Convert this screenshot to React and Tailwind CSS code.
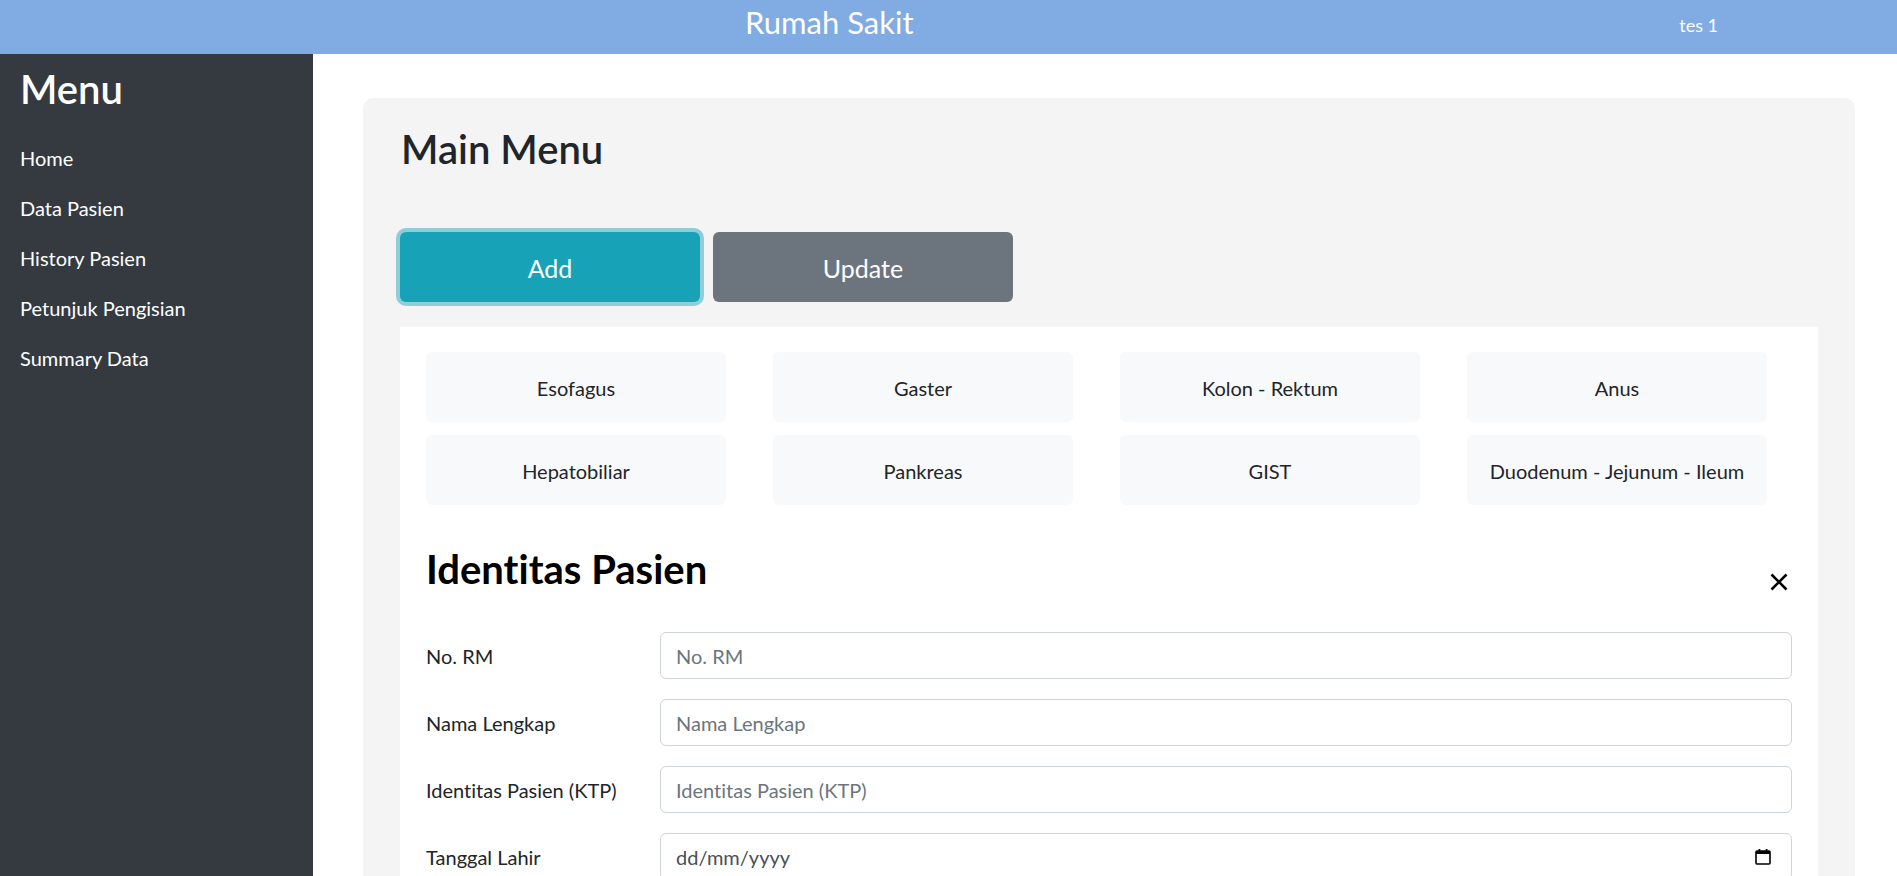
import { useState } from "react";

const categories = [
    "Esofagus",
    "Gaster",
    "Kolon - Rektum",
    "Anus",
    "Hepatobiliar",
    "Pankreas",
    "GIST",
    "Duodenum - Jejunum - Ileum",
];

const fields = [
    { label: "No. RM", placeholder: "No. RM" },
    { label: "Nama Lengkap", placeholder: "Nama Lengkap" },
    { label: "Identitas Pasien (KTP)", placeholder: "Identitas Pasien (KTP)" },
];

const menu = ["Home", "Data Pasien", "History Pasien", "Petunjuk Pengisian", "Summary Data"];

function CalendarIcon() {
    return (
        <svg width="16" height="17" viewBox="0 0 16 17" fill="none">
            <rect x="1" y="3" width="14" height="13" rx="1" stroke="#000" strokeWidth="1.6" />
            <rect x="1" y="3" width="14" height="3" fill="#000" />
            <rect x="3.5" y="1" width="1.8" height="3" fill="#000" />
            <rect x="10.7" y="1" width="1.8" height="3" fill="#000" />
        </svg>
    );
}

export default function App() {
    const [mode, setMode] = useState("add");

    return (
        <div className="min-h-screen flex flex-col font-['Lato',sans-serif] [font-variant-ligatures:none]">
            <header className="h-[54px] bg-[#81abe3] text-white flex items-start shrink-0">
                <div className="pl-[745px] pt-[4px] text-[31px] leading-[1.2]">Rumah Sakit</div>
                <div className="ml-auto pr-[179px] pt-[15px] text-[18px] leading-[1.2]">tes 1</div>
            </header>

            <div className="flex flex-1">
                <aside className="w-[313px] shrink-0 bg-[#343a40] text-white pl-[20px] pt-[11px]">
                    <h1 className="text-[40px] leading-[1.2] font-semibold">Menu</h1>
                    <nav className="flex flex-col gap-[26px] mt-[33px]">
                        {menu.map((m) => (
                            <a key={m} href="#" className="text-[20px] leading-[24px]">{m}</a>
                        ))}
                    </nav>
                </aside>

                <main className="flex-1 pl-[50px] pr-[42px] pt-[44px] pb-[40px]">
                    <div className="bg-[#f4f4f4] rounded-[10px] px-[37px] pt-[27px] pb-[40px]">
                        <h2 className="text-[40px] leading-[1.2] font-semibold text-[#212529] pl-[1px]">Main Menu</h2>

                        <div className="flex gap-[13px] mt-[59px]">
                            <button
                                onClick={() => setMode("add")}
                                className="w-[300px] h-[70px] rounded-[6px] bg-[#17a2b8] text-white text-[25px] pt-[3px] ring-4 ring-[#8fcdd8]"
                            >
                                Add
                            </button>
                            <button
                                onClick={() => setMode("update")}
                                className="w-[300px] h-[70px] rounded-[6px] bg-[#6c757d] text-white text-[25px] pt-[3px]"
                            >
                                Update
                            </button>
                        </div>

                        <div className="bg-white mt-[25px] px-[26px] pt-[25px] pb-[300px]">
                            <div className="grid grid-cols-[repeat(4,300px)] gap-x-[47px] gap-y-[13px]">
                                {categories.map((c) => (
                                    <div key={c} className="h-[70px] rounded-[6px] bg-[#f8f9fa] flex items-center justify-center pt-[2px] text-[20px] text-[#212529]">
                                        {c}
                                    </div>
                                ))}
                            </div>

                            <div className="flex justify-between items-start mt-[40px]">
                                <h2 className="text-[40px] leading-[1.2] font-bold text-black">Identitas Pasien</h2>
                                <button className="mt-[28px] mr-[4px]" aria-label="close">
                                    <svg width="18" height="18" viewBox="0 0 18 18">
                                        <path d="M1.5 1.5 L16.5 16.5 M16.5 1.5 L1.5 16.5" stroke="#000" strokeWidth="2.6" />
                                    </svg>
                                </button>
                            </div>

                            <div className="flex flex-col gap-[20px] mt-[39px]">
                                {fields.map((f) => (
                                    <div key={f.label} className="flex items-center">
                                        <label className="w-[234px] shrink-0 text-[20px] text-[#212529]">{f.label}</label>
                                        <input
                                            placeholder={f.placeholder}
                                            className="flex-1 h-[47px] border border-[#ced4da] rounded-[6px] px-[15px] text-[20px] placeholder:text-[#6c757d] outline-none"
                                        />
                                    </div>
                                ))}
                                <div className="flex items-center">
                                    <label className="w-[234px] shrink-0 text-[20px] text-[#212529]">Tanggal Lahir</label>
                                    <div className="flex-1 h-[47px] border border-[#ced4da] rounded-[6px] pl-[15px] pr-[20px] flex items-center justify-between text-[20px] text-[#495057]">
                                        <span>dd/mm/yyyy</span>
                                        <CalendarIcon />
                                    </div>
                                </div>
                            </div>
                        </div>
                    </div>
                </main>
            </div>
        </div>
    );
}
